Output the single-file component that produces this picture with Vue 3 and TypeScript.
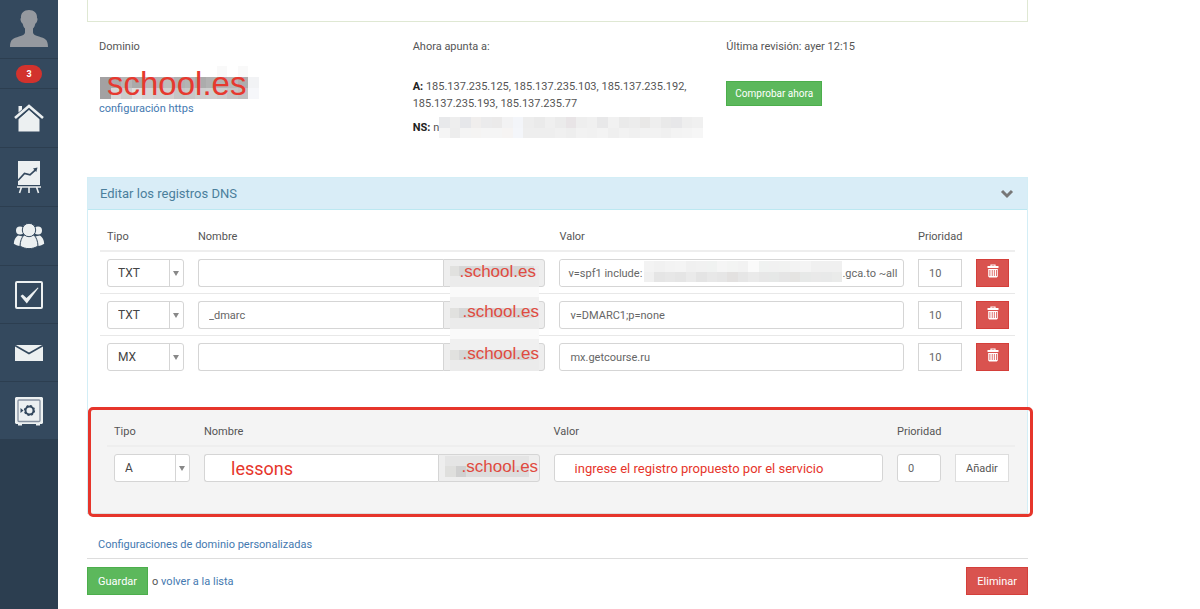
<script setup lang="ts">
import { ref } from 'vue'

interface DnsRecord {
  type: string
  name: string
  value: string
  valueTail?: string
  priority: string
  above: boolean
  below: boolean
}

const records = ref<DnsRecord[]>([
  { type: 'TXT', name: '', value: 'v=spf1 include:', valueTail: '.gca.to ~all', priority: '10', above: false, below: true },
  { type: 'TXT', name: '_dmarc', value: 'v=DMARC1;p=none', priority: '10', above: true, below: true },
  { type: 'MX', name: '', value: 'mx.getcourse.ru', priority: '10', above: true, below: false },
])

const types = ['A', 'TXT', 'MX', 'CNAME']
const draft = ref({ type: 'A', name: 'lessons', value: 'ingrese el registro propuesto por el servicio', priority: '0' })

const domainTiles = [
  ['', '', '', '', '', '', '', '', '', '', '', '#f9f9f9', '', '#f9f9f9', ''],
  ['#a3a1a2', '#aaa9aa', '#b5b5b5', '#aaaaaa', '#b9b9b9', '#b4b4b4', '#bcbcbc', '#b1b1b1', '#b4b4b4', '#acacac', '#b2b2b2', '#b3b3b3', '#b7b7b7', '#adadad', '#f2f3f5'],
  ['#a3a1a2', '#d6d6d6', '#cccccc', '#dddddd', '#d5d5d5', '#d0d0d0', '#d0d0d0', '#c5c5c5', '#c8c8c8', '#cecece', '#d0d0d0', '#cccccc', '#c5c5c5', '#c0c0c0', '#f6f7fa'],
]
const nsTiles = [
  ['#e8e9eb', '#eeeeee', '#e6e7ea', '#f0eeed', '#ebebec', '#ebeaea', '#f2f2f3', '#f3f5f9', '#ededed', '#eaeaea', '#efefef', '#ebebeb', '#e8e4e6', '#eeeeee', '#f0f0f0', '#e8e8e9', '#f1f1f1', '#eaeaea', '#ececec', '#e9e8e7', '#eeeeee', '#e9e9e9', '#e7e7e9', '#eeeeee', '#f0f0f0'],
  ['#f5f5f5', '#ededed', '#f4f4f4', '#f5f4f3', '#f5f5f5', '#f5f5f5', '#f6f4f3', '#f4f6fa', '#eeeeee', '#eeeeee', '#eeeeee', '#f0f0f0', '#eeeeee', '#f2f2f2', '#f1f1f1', '#f3f3f3', '#efefef', '#f2f2f2', '#f0f0f0', '#f2f2f2', '#f2f2f2', '#f0f0f0', '#f3f3f3', '#f4f4f4', '#f6f6f6'],
]
const valueTiles = [
  ['#f3f3f3', '#f1f1f1', '#f3f3f3', '#f4f4f4', '#f0f0f0', '#f1f1f1', '#f0f2f1', '#f5f5f5', '#f3f4f3', '#f2f2f2', '#fafafa', '#f0f2f1', '#f1f1f1', '#f1f2f1', '#f3f3f3', '#f4f4f4', '#f0f0f0', '#f0f0f0', '#f0f0f0'],
  ['#f0f0f0', '#e5e5e5', '#e7e7e7', '#e5e5e5', '#eaeaea', '#e4e4e4', '#e8e8e8', '#e6e6e6', '#e3e1e0', '#e6e6e6', '#eaeaea', '#e7e7e7', '#e6e8e7', '#e5e5e5', '#e5e4e2', '#e7e9e8', '#e9e9e9', '#e8e9e9', '#eaebea'],
]
const suffixTiles = ['#e1e1df', '#d7d7d7', '#d8d8d8', '#dcdcdc', '#d6d6d6', '#d9d9d9', '#d6d6d6', '#dcdcdc']
</script>

<template>
  <div class="page">
    <nav class="sidebar" aria-label="Menú">
      <a href="#" class="side-item" aria-label="Perfil">
        <svg width="40" height="40" viewBox="0 0 40 40">
          <path fill="#95999f" d="M20 1c-5 0-8.500 3-8 8-.8.300-.7 2 .2 4 .4.900 1 1.500 1.500 1.700.4 2.300 1.300 3.800 2.300 4.700v4c0 2-2.500 3-6 4.200C4.500 29.500 1 30 1 38h38c0-8-3.500-8.500-9-10.400-3.500-1.200-6-2.200-6-4.200v-4c1-.9 1.900-2.400 2.300-4.700.6-.2 1.100-.8 1.500-1.700.9-2 1-3.700.2-4C28.500 4 25 1 20 1z" />
        </svg>
      </a>
      <a href="#" class="side-item side-count"><span class="count">3</span></a>
      <a href="#" class="side-item" aria-label="Inicio">
        <svg width="30" height="30" viewBox="0 0 30 30">
          <path fill="#ecf0f1" d="M4.500 3H8v3.500L4.500 9.500zM15 6.500L25.500 16v12.500h-21V16z" />
          <path fill="none" stroke="#34495e" stroke-width="1.200" d="M2.500 17L15 6l12.500 11" />
          <path fill="none" stroke="#ecf0f1" stroke-width="2.600" d="M1 15L15 3l14 12" />
        </svg>
      </a>
      <a href="#" class="side-item" aria-label="Informes">
        <svg width="26" height="34" viewBox="0 0 26 34">
          <path fill="#ecf0f1" d="M2 1h22v24H2z" />
          <path fill="none" stroke="#34495e" stroke-width="1.700" d="M2 20.500l6.500-7 5.500 1.300 5.500-5" />
          <path fill="#34495e" d="M17 8.500l4.500-1-1.200 4.500z" />
          <path fill="none" stroke="#ecf0f1" stroke-width="1.600" d="M1 27h24M5.500 27l-2 6M13 27v6M20.500 27l2 6" />
        </svg>
      </a>
      <a href="#" class="side-item" aria-label="Usuarios">
        <svg width="32" height="28" viewBox="0 0 32 28">
          <g fill="#ecf0f1">
            <circle cx="7" cy="8.500" r="4" /><circle cx="25" cy="8.500" r="4" />
            <path d="M5 13.500l5 1L7 24c-2.500-.3-4.500-1-6.200-2.200C1 18 2.500 15 5 13.500zM27 13.500l-5 1L25 24c2.500-.3 4.500-1 6.200-2.200-.2-3.800-1.700-6.800-4.200-8.300z" />
          </g>
          <g fill="#ecf0f1" stroke="#34495e" stroke-width="1">
            <path d="M11 13h10c2.500 2.500 3.800 6.500 4 11-5 3.500-13 3.500-18 0 .2-4.500 1.500-8.500 4-11z" />
            <circle cx="16" cy="8" r="6.700" />
          </g>
        </svg>
      </a>
      <a href="#" class="side-item" aria-label="Tareas">
        <svg width="30" height="30" viewBox="0 0 30 30">
          <rect x="2" y="2" width="26" height="26" rx="1" fill="none" stroke="#ecf0f1" stroke-width="2" />
          <path fill="#ecf0f1" d="M6.500 16l2.200-1.500L12.500 18 23.800 7.500l.7.600L12.800 23.500z" />
        </svg>
      </a>
      <a href="#" class="side-item" aria-label="Mensajes">
        <svg width="30" height="20" viewBox="0 0 30 20">
          <path fill="#ecf0f1" d="M1 2h28v16H1z" />
          <path fill="none" stroke="#34495e" stroke-width="1.600" d="M1 2.500l14 8 14-8" />
        </svg>
      </a>
      <a href="#" class="side-item" aria-label="Finanzas">
        <svg width="30" height="30" viewBox="0 0 30 30">
          <path fill="#ecf0f1" d="M2 1h26l1 1v25l-1 1h-2v1.500h-4V28H8v1.500H4V28H2l-1-1V2z" />
          <rect x="4" y="4" width="22" height="21.500" rx="1" fill="none" stroke="#8590a0" stroke-width="1.300" />
          <circle cx="15.500" cy="14.500" r="4" fill="none" stroke="#34495e" stroke-width="2" />
          <circle cx="15.500" cy="14.500" r="5" fill="none" stroke="#34495e" stroke-width="1.200" stroke-dasharray="2 1.927" />
          <path fill="#34495e" d="M6.500 12l3 2.500-3 2.500z" />
        </svg>
      </a>
    </nav>

    <main class="content">
      <div class="top-box"></div>

      <section class="summary">
        <div class="summary-col">
          <div class="summary-label">Dominio</div>
          <div class="domain">
            <svg class="tiles" width="159" height="33" viewBox="0 0 15 3" preserveAspectRatio="none" shape-rendering="crispEdges" aria-hidden="true">
              <template v-for="(line, y) in domainTiles" :key="y">
                <rect v-for="(c, x) in line" :key="x" :x="x" :y="y" width="1" height="1" :fill="c || 'none'" />
              </template>
            </svg>
            <span class="domain-name">school.es</span>
          </div>
          <a href="#">configuración https</a>
        </div>
        <div class="summary-col">
          <div class="summary-label">Ahora apunta a:</div>
          <p><b>A:</b> 185.137.235.125, 185.137.235.103, 185.137.235.192, 185.137.235.193, 185.137.235.77</p>
          <p class="ns"><b>NS:</b> n<svg width="264" height="21" viewBox="0 0 25 2" preserveAspectRatio="none" shape-rendering="crispEdges" aria-hidden="true">
              <template v-for="(line, y) in nsTiles" :key="y">
                <rect v-for="(c, x) in line" :key="x" :x="x" :y="y" width="1" height="1" :fill="c" />
              </template>
            </svg></p>
        </div>
        <div class="summary-col">
          <div class="summary-label">Última revisión: ayer 12:15</div>
          <button type="button" class="btn green small">Comprobar ahora</button>
        </div>
      </section>

      <section class="panel">
        <h2 class="panel-head">
          <span>Editar los registros DNS</span>
          <svg width="14" height="10" viewBox="0 0 14 10"><path fill="none" stroke="#777" stroke-width="3" d="M2 2l5 5 5-5" /></svg>
        </h2>
        <div class="panel-body">
          <table>
            <colgroup><col class="c-type"><col class="c-name"><col><col class="c-prio"><col class="c-del"></colgroup>
            <thead>
              <tr><th>Tipo</th><th>Nombre</th><th>Valor</th><th>Prioridad</th><th></th></tr>
            </thead>
            <tbody>
              <tr v-for="(r, i) in records" :key="i">
                <td>
                  <div class="select">
                    <select v-model="r.type" aria-label="Tipo"><option v-for="t in types" :key="t">{{ t }}</option></select>
                  </div>
                </td>
                <td>
                  <div class="group">
                    <input v-model="r.name" type="text" aria-label="Nombre">
                    <span class="suffix">
                      <svg class="suffix-tiles" width="89" height="42" viewBox="0 0 89 42" shape-rendering="crispEdges" aria-hidden="true">
                        <rect v-if="r.above" width="89" height="11" fill="#f0f0f0" />
                        <rect v-for="(c, x) in suffixTiles" :key="x" :x="x * 11 - 2" y="11" width="11" height="10" :fill="c" />
                        <rect x="84" y="11" width="5" height="10" fill="#ebebeb" />
                        <rect y="21" width="89" height="11" fill="#ebebeb" />
                        <rect v-if="r.below" y="32" width="89" height="10" fill="#fafafa" />
                      </svg>
                      <span class="suffix-text" :class="{ shifted: r.above }">.school.es</span>
                    </span>
                  </div>
                </td>
                <td>
                  <div v-if="r.valueTail" class="field">
                    <input v-model="r.value" type="text" aria-label="Valor" class="masked">
                    <svg width="198" height="21" viewBox="0 0 19 2" preserveAspectRatio="none" shape-rendering="crispEdges" aria-hidden="true">
                      <template v-for="(line, y) in valueTiles" :key="y">
                        <rect v-for="(c, x) in line" :key="x" :x="x" :y="y" width="1" height="1" :fill="c" />
                      </template>
                    </svg>
                    <span>{{ r.valueTail }}</span>
                  </div>
                  <input v-else v-model="r.value" type="text" aria-label="Valor">
                </td>
                <td><input v-model="r.priority" type="text" aria-label="Prioridad" class="square"></td>
                <td>
                  <button type="button" class="btn red trash" aria-label="Eliminar registro">
                    <svg width="12" height="14" viewBox="0 0 12 14">
                      <path fill="none" stroke="#fff" stroke-width="1.200" d="M4 2V1h4v1" />
                      <path fill="#fff" fill-rule="evenodd" d="M.5 2h11v2H.5zM1.200 5h9.600v7.500l-1 1H2.200l-1-1zM2.500 6v6h.8V6zM4.800 6v6h.8V6zM6.900 6v6h.8V6zM9 6v6h.8V6z" />
                    </svg>
                  </button>
                </td>
              </tr>
            </tbody>
          </table>
        </div>
        <div class="new-record">
          <table>
            <colgroup><col class="n-type"><col class="n-name"><col><col class="c-prio"><col class="n-add"></colgroup>
            <thead>
              <tr><th>Tipo</th><th>Nombre</th><th>Valor</th><th>Prioridad</th><th></th></tr>
            </thead>
            <tbody>
              <tr>
                <td>
                  <div class="select">
                    <select v-model="draft.type" aria-label="Tipo nuevo"><option v-for="t in types" :key="t">{{ t }}</option></select>
                  </div>
                </td>
                <td>
                  <div class="group">
                    <input v-model="draft.name" type="text" aria-label="Nombre nuevo" class="note-name">
                    <span class="suffix">
                      <svg class="suffix-tiles" width="89" height="42" viewBox="0 0 89 42" shape-rendering="crispEdges" aria-hidden="true">
                        <rect x="0" y="6" width="84" height="10" fill="#e5e5e5" />
                        <rect x="0" y="16" width="11" height="11" fill="#dfdfdd" />
                        <rect x="11" y="16" width="10" height="11" fill="#d0d0d0" />
                        <rect x="21" y="16" width="63" height="11" fill="#dddddd" />
                      </svg>
                      <span class="suffix-text far">.school.es</span>
                    </span>
                  </div>
                </td>
                <td><input v-model="draft.value" type="text" aria-label="Valor nuevo" class="note-value"></td>
                <td><input v-model="draft.priority" type="text" aria-label="Prioridad nueva"></td>
                <td><button type="button" class="btn plain">Añadir</button></td>
              </tr>
            </tbody>
          </table>
          <div class="highlight"></div>
        </div>
      </section>

      <div class="custom"><a href="#">Configuraciones de dominio personalizadas</a></div>
      <footer class="actions">
        <button type="button" class="btn green">Guardar</button>
        <span>o <a href="#">volver a la lista</a></span>
        <button type="button" class="btn red last">Eliminar</button>
      </footer>
    </main>
  </div>
</template>

<style>
body {
  margin: 0;
  background: #fff;
}
</style>

<style scoped>
* {
  box-sizing: border-box;
}
.page {
  display: flex;
  min-height: 100vh;
  overflow: hidden;
  font: 11px/17px Roboto, "Open Sans", sans-serif;
  color: #555;
}
a {
  color: #4479b0;
  text-decoration: none;
}
.sidebar {
  flex: 0 0 58px;
  background: #2c3e50;
}
.side-item {
  display: flex;
  align-items: center;
  justify-content: center;
  height: 58px;
  background: #34495e;
  border-bottom: 1px solid #2c3e50;
}
.side-item:nth-child(-n + 5) {
  height: 59px;
}
.side-item.side-count {
  height: 30px;
}
.count {
  width: 26px;
  border-radius: 9px;
  background: #d2322d;
  color: #fff;
  font-size: 9px;
  font-weight: 700;
  line-height: 18px;
  text-align: center;
}
.content {
  flex: 1;
  min-width: 0;
  padding: 0 172px 14px 29px;
}
.top-box {
  height: 22px;
  border: 1px solid #dfe8d3;
  border-top: 0;
}
.summary {
  display: grid;
  grid-template-columns: repeat(3, minmax(0, 1fr));
  min-height: 155px;
  padding-top: 16px;
}
.summary-col {
  padding: 0 12px;
}
.summary-label {
  margin-bottom: 23px;
}
.domain {
  position: relative;
  height: 22px;
}
.tiles {
  position: absolute;
  left: 1px;
  top: -12px;
}
.domain-name {
  position: absolute;
  left: 8px;
  top: -12px;
  font: 33px/36px "Liberation Sans", Arial, sans-serif;
  color: #e6392f;
}
p {
  margin: 0;
}
b {
  color: #222;
}
.ns {
  display: flex;
  align-items: center;
  gap: 3px;
  margin-top: 5px;
}
.ns svg {
  flex: none;
  margin-left: -3px;
}
.btn {
  display: inline-flex;
  align-items: center;
  justify-content: center;
  height: 28px;
  padding: 0 10px;
  border: 1px solid;
  font: inherit;
  color: #fff;
}
.green {
  background: #5cb85c;
  border-color: #4cae4c;
}
.red {
  background: #d9534f;
  border-color: #d43f3a;
}
.plain {
  background: #fff;
  border-color: #ddd;
  color: #555;
}
.small {
  height: 25px;
  margin-top: 3px;
  padding: 0 8px;
  font-size: 10px;
}
.trash {
  width: 33px;
  padding: 0 0 4px;
}
.panel {
  border: 1px solid #d3eef6;
  border-bottom-color: #ddd;
}
.panel-head {
  display: flex;
  align-items: center;
  justify-content: space-between;
  margin: 0;
  padding: 7px 13px 7px 12px;
  border-bottom: 1px solid #bce8f1;
  background: #d9edf7;
  font-size: 13px;
  font-weight: 400;
  color: #4b7f9c;
}
.panel-body {
  padding: 10px 12px 32px;
}
table {
  width: 100%;
  table-layout: fixed;
  border-collapse: separate;
  border-spacing: 0;
}
.c-type {
  width: 91px;
}
.c-name {
  width: 39.5%;
}
.c-prio {
  width: 58px;
}
.c-del {
  width: 46px;
}
.n-type {
  width: 90px;
}
.n-name {
  width: 38.5%;
}
.n-add {
  width: 67px;
}
th {
  padding: 8px 0 5px 7px;
  border-bottom: 2px solid #eee;
  font-weight: 400;
  text-align: left;
}
td {
  height: 42px;
  padding: 7px 7px 6px;
  border-bottom: 1px solid #e8e8e8;
  vertical-align: top;
}
tr:last-child td {
  border-bottom: 0;
}
td .btn {
  vertical-align: top;
}
input,
select {
  display: block;
  width: 100%;
  height: 28px;
  padding: 0 10px;
  border: 1px solid #d5d5d5;
  border-radius: 3px;
  background: #fff;
  font: inherit;
  color: #666;
}
.square {
  border-radius: 0;
}
.select {
  position: relative;
}
.select select {
  appearance: none;
  font-size: 12px;
  color: #444;
}
.select::before {
  content: "";
  position: absolute;
  right: 14px;
  top: 1px;
  bottom: 1px;
  border-left: 1px solid #d5d5d5;
}
.select::after {
  content: "";
  position: absolute;
  right: 5px;
  top: 12px;
  border: 3px solid transparent;
  border-top: 5px solid #888;
  border-bottom: 0;
}
.group {
  display: flex;
}
.group input {
  flex: 1;
  min-width: 0;
  border-right: 0;
  border-radius: 3px 0 0 3px;
}
.suffix {
  position: relative;
  flex: 0 0 102px;
  height: 28px;
  border: 1px solid #d5d5d5;
  border-radius: 0 3px 3px 0;
  background: #eee;
}
.suffix-tiles {
  position: absolute;
  left: 6px;
  top: -5px;
}
.suffix-text {
  position: absolute;
  left: 15px;
  top: 2px;
  font: 17px/20px "Liberation Sans", Arial, sans-serif;
  color: #e04a40;
}
.shifted {
  left: 18px;
  top: 0;
}
.far {
  left: 23px;
}
.field {
  display: flex;
  align-items: center;
  height: 28px;
  border: 1px solid #d5d5d5;
  border-radius: 3px;
  color: #666;
}
.field .masked {
  flex: 0 0 84px;
  height: 26px;
  padding: 0 0 0 8px;
  border: 0;
}
.field svg {
  flex: none;
  margin-bottom: 4px;
}
.new-record {
  position: relative;
  padding: 5px 12px 24px 19px;
  background: #f4f4f4;
}
.highlight {
  position: absolute;
  inset: -3px -6px -4px 0;
  border: 3px solid #e6352b;
  border-radius: 5px;
  pointer-events: none;
}
.new-record .note-name {
  padding-left: 26px;
  font-size: 18px;
  color: #e6352b;
}
.note-value {
  padding-left: 20px;
  font-size: 13px;
  color: #e6352b;
}
.custom {
  margin-top: 22px;
  padding: 0 11px 5px;
  border-bottom: 1px solid #ddd;
}
.actions {
  display: flex;
  align-items: center;
  gap: 4px;
  padding-top: 8px;
}
.last {
  margin-left: auto;
}
</style>
